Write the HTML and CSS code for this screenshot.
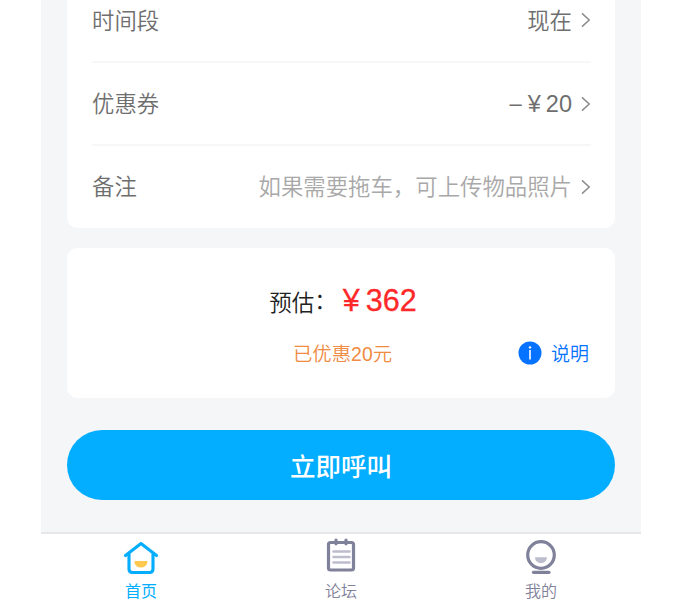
FILE: index.html
```html
<!DOCTYPE html>
<html lang="zh-CN">
<head>
<meta charset="utf-8">
<title>立即呼叫</title>
<link rel="stylesheet" href="styles.css">
</head>
<body>
<div class="phone">
  <main class="content">
    <section class="card options">
      <div class="row">
        <span class="label">时间段</span>
        <span class="value">现在</span>
        <svg class="chevron" viewBox="0 0 10 16"><path d="M1 1.4 8.2 8 1 14.6"/></svg>
      </div>
      <div class="row">
        <span class="label">优惠券</span>
        <span class="value amount"><span class="minus">–</span><span>¥</span><span>20</span></span>
        <svg class="chevron" viewBox="0 0 10 16"><path d="M1 1.4 8.2 8 1 14.6"/></svg>
      </div>
      <div class="row">
        <span class="label">备注</span>
        <span class="value hint">如果需要拖车，可上传物品照片</span>
        <svg class="chevron" viewBox="0 0 10 16"><path d="M1 1.4 8.2 8 1 14.6"/></svg>
      </div>
    </section>
    <section class="card estimate">
      <div class="total"><span class="total-label">预估<span class="colon">：</span></span><span class="price"><span>¥</span><span>362</span></span></div>
      <div class="discount-row">
        <span class="discount">已优惠20元</span>
        <a class="explain">
          <svg class="info" viewBox="0 0 24 24"><circle cx="12" cy="12" r="11.5" fill="#0573ff"/><circle cx="12" cy="6.4" r="1.2" fill="#fff"/><path d="M12 9v9.500" stroke="#fff" stroke-width="1.6" fill="none"/></svg>
          <span>说明</span>
        </a>
      </div>
    </section>
    <button class="call">立即呼叫</button>
  </main>
  <nav class="tabs">
    <a class="tab active">
      <svg class="icon" viewBox="0 0 36 36" fill="none" stroke="#05adff" stroke-width="3.100" stroke-linecap="round" stroke-linejoin="round"><path d="M2.500 17.500 18 5.500 33.500 17.500M6 16v15q0 3.500 3.500 3.500h17q3.500 0 3.500-3.500V16"/><path d="M11.300 23h13.200a6.600 6.600 0 0 1-13.200 0z" fill="#ffc94f" stroke="none"/></svg>
      <span>首页</span>
    </a>
    <a class="tab">
      <svg class="icon" viewBox="0 0 36 36" fill="none" stroke="#80819a" stroke-width="3.200" stroke-linecap="round"><rect x="5.500" y="4.500" width="25" height="27.500" rx="2"/><path d="M13 2v3.800M23 2v3.800"/><path d="M10.500 13.500h16M10.500 19h16M10.500 24.500h16" stroke="#bdbdcd" stroke-width="2.600"/></svg>
      <span>论坛</span>
    </a>
    <a class="tab">
      <svg class="icon" viewBox="0 0 36 36" fill="none" stroke="#80819a" stroke-width="3.200" stroke-linecap="round"><circle cx="18" cy="17" r="13.300"/><path d="M10.500 34.300h15.500"/><path d="M12 19.300h12a6 6 0 0 1-12 0z" fill="#bdbdcd" stroke="none"/></svg>
      <span>我的</span>
    </a>
  </nav>
</div>
</body>
</html>
```

FILE: styles.css
```css
* {
  box-sizing: border-box;
}

body {
  margin: 0;
  height: 606px;
  overflow: hidden;
  background: #fff;
  font-family: "Noto Sans CJK SC", sans-serif;
  font-weight: 350;
}

.phone {
  display: flex;
  flex-direction: column;
  width: 600px;
  height: 606px;
  margin-left: 41px;
  background: #f4f6f8;
}

.content {
  flex: 1;
  padding: 0 26px;
}

.card {
  background: #fff;
  border-radius: 10px;
}

.options {
  height: 228px;
  padding: 0 24px 0 25px;
  border-radius: 0 0 10px 10px;
}

.row {
  display: flex;
  align-items: center;
  height: 83px;
  border-bottom: 2px solid #f6f7f8;
  color: #6e6e6e;
  font-size: 22.4px;
  line-height: 32px;
}

.row:first-child {
  height: 63px;
  padding-bottom: 20px;
  align-items: flex-end;
}

.row:first-child .chevron {
  margin-bottom: 13px;
}

.row:first-child .label,
.row:first-child .value {
  margin-bottom: 6px;
}

.row:last-child {
  height: 82px;
  border-bottom: 0;
}

.label,
.hint {
  padding-bottom: 3px;
}

.row:last-child .label,
.hint {
  padding-bottom: 4px;
}

.row:first-child .label {
  padding-bottom: 0;
}

.label {
  flex: 1;
}

.amount {
  display: flex;
  gap: 5px;
  font-family: "Liberation Sans", sans-serif;
  font-size: 23.5px;
}

.minus {
  padding-right: 1px;
  font-size: 22px;
}

.hint {
  color: #a8a8a8;
}

.chevron {
  width: 10px;
  height: 16px;
  margin-left: 9px;
  fill: none;
  stroke: #8c8c8c;
  stroke-width: 1.5;
}

.estimate {
  height: 150px;
  margin-top: 20px;
  padding-top: 34px;
}

.total {
  display: flex;
  justify-content: center;
  align-items: baseline;
  height: 36px;
  padding-left: 4px;
  line-height: 36px;
}

.total-label {
  color: #222;
  font-size: 22.5px;
}

.colon {
  vertical-align: 2px;
  line-height: 1;
}

.price {
  display: flex;
  gap: 6px;
  margin-left: 6px;
  color: #ff2828;
  font: 500 30.5px/36px "Liberation Sans", sans-serif;
  -webkit-text-stroke: .3px #ff2828;
}

.discount-row {
  display: grid;
  grid-template-columns: 1fr auto 1fr;
  align-items: center;
  height: 28px;
  margin-top: 20px;
  padding: 0 26px 0 29px;
  font-size: 19px;
  line-height: 28px;
}

.discount {
  grid-column: 2;
  padding-top: 2px;
  color: #f08b43;
  font-size: 19.4px;
  font-family: "Liberation Sans", "Noto Sans CJK SC", sans-serif;
}

.explain {
  display: flex;
  justify-content: flex-end;
  align-items: center;
  gap: 9px;
  color: #0573ff;
}

.info {
  width: 24px;
  height: 24px;
}

.call {
  display: block;
  width: 100%;
  height: 70px;
  margin-top: 32px;
  padding: 0;
  border: 0;
  border-radius: 35px;
  background: #03adff;
  color: #fff;
  font: 500 25.5px/68px "Noto Sans CJK SC", sans-serif;
}

.tabs {
  display: flex;
  height: 74px;
  border-top: 2px solid #e7e7e9;
  background: #fff;
}

.tab {
  display: flex;
  flex: 1;
  flex-direction: column;
  align-items: center;
  padding-top: 4px;
  color: #80819a;
  font-size: 16px;
  line-height: 24px;
}

.active {
  color: #03adff;
  font-weight: 400;
}

.icon {
  width: 36px;
  height: 36px;
  margin-bottom: 4px;
}
```
